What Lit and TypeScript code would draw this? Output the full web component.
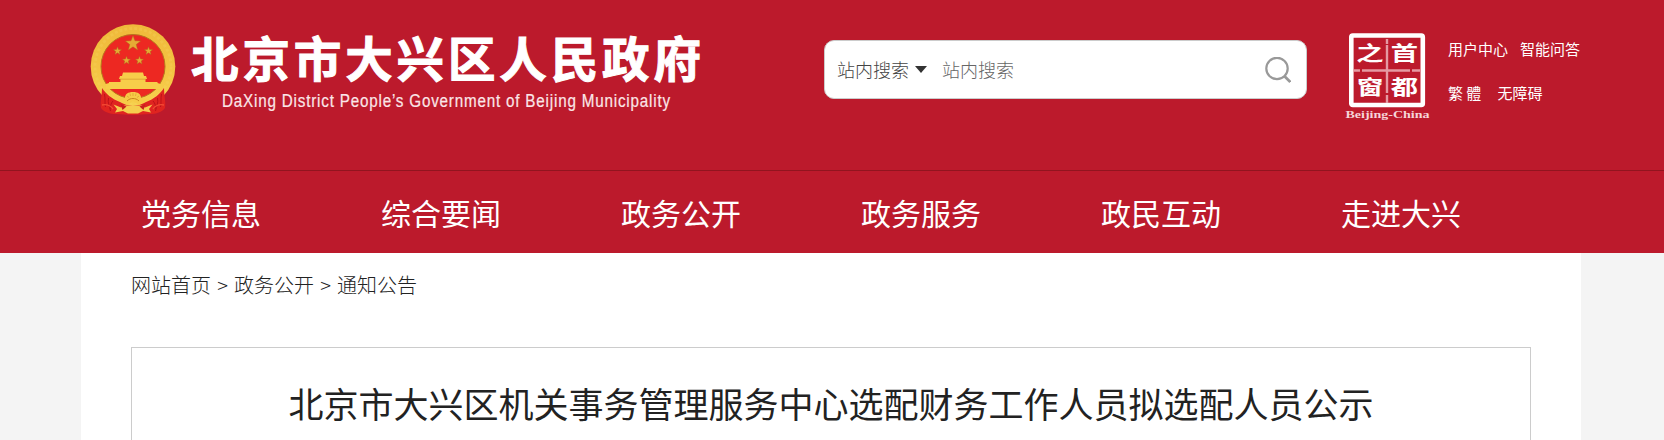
import { LitElement, css, html, svg } from "lit";
import { customElement } from "lit/decorators.js";

const NAV = ["党务信息", "综合要闻", "政务公开", "政务服务", "政民互动", "走进大兴"];
const CRUMBS = ["网站首页", "政务公开", "通知公告"];

const STARS = [
  { x: 47, y: 23.5, r: 8 },
  { x: 31.5, y: 31, r: 4.3 },
  { x: 62.5, y: 31, r: 4.3 },
  { x: 40.5, y: 40.5, r: 4.3 },
  { x: 53.5, y: 40.5, r: 4.3 },
];

const starPoints = (cx: number, cy: number, r: number) =>
  Array.from({ length: 10 }, (_, i) => {
    const radius = i % 2 ? r * 0.42 : r;
    const angle = (Math.PI / 5) * i - Math.PI / 2;
    return `${(cx + radius * Math.cos(angle)).toFixed(2)},${(cy + radius * Math.sin(angle)).toFixed(2)}`;
  }).join(" ");

/** National emblem and the name of the site. */
@customElement("site-logo")
export class SiteLogo extends LitElement {
  static styles = css`
    :host {
      display: block;
    }

    svg {
      display: block;
    }

    .name {
      font: 700 47.5px "Noto Sans CJK SC", sans-serif;
      fill: #fff;
      stroke: #fff;
      stroke-width: 1px;
    }

    .subtitle {
      font: 17.5px "Liberation Sans", Arial, sans-serif;
      fill: #fbe6e8;
      stroke: #fbe6e8;
      stroke-width: 0.2px;
    }
  `;

  // one side of the ribbon; the other side is its mirror image
  private ribbon() {
    return svg`
      <path d="M16 68C16 75 14 82 15 88c3 4 9 6 15 6l17 1V86c-6-1-10-2-13-4-8-3-14-8-18-14z" fill="#e02420" />
      <path d="M18.5 74c1 5 0 9 1 13M22.5 78c-1 5 1 8 2 13M27 81c-2 2-3 5-2 8" fill="none" stroke="#bd1219" stroke-width="1" />
      <path d="M16 85c5-1 8 0 11 4" fill="none" stroke="#f24a33" stroke-width="1.3" />
      <path d="M27.5 84.5l7.500 3 3-2h9v8h-5l-5-2.5-8 1.5 2-3.500z" fill="#f5cd4e" />
      <path d="M34.5 84l6 2.500-4 3.500z" fill="#c9201d" />
    `;
  }

  render() {
    return html`
      <svg width="620" height="100" viewBox="0 0 620 100">
        <defs>
          <linearGradient id="gold" x1="0" y1="0" x2="0" y2="1">
            <stop offset="0" stop-color="#efb93a" />
            <stop offset="0.5" stop-color="#f4c342" />
            <stop offset="1" stop-color="#f6d24e" />
          </linearGradient>
        </defs>
        <circle cx="47" cy="46.5" r="42.3" fill="url(#gold)" />
        <circle cx="47" cy="46.5" r="38" fill="none" stroke="#f8d868" stroke-width="3" stroke-dasharray="3 2" opacity="0.25" />
        <circle cx="47" cy="46.5" r="32" fill="#ed2822" stroke="#b8751d" stroke-width="1" />
        ${STARS.map((s) => svg`<polygon points=${starPoints(s.x, s.y, s.r)} fill="#e5ab35" stroke="#a96b1c" stroke-width="0.4" />`)}
        <path d="M37 52.5h20l1 3.5h2l1 3h-1.5v3h12v1l3 1v5H20v-5l3-1v-1h11.5v-3H33l1-3h2z" fill="#f7ce4a" />
        <path d="M34 59.2h26" stroke="#d59a30" stroke-width="0.7" />
        ${this.ribbon()}
        <g transform="translate(94 0) scale(-1 1)">${this.ribbon()}</g>
        <path d="M39 78c0-4 3-6 8-6s8 2 8 6l9 1-11 6-6-4-6 4-11-6z" fill="#f6cb47" />
        <path d="M41 81c2-2 4-2.5 6-2.5s4 .5 6 2.5" fill="none" stroke="#c9861f" stroke-width="1" />
        <path d="M41 76l2 1.5M44 73.500l.5 2.500M47 73v3M50 73.500l-.5 2.500M53 76l-2 1.5" stroke="#d99a2c" stroke-width="0.6" />
        <text class="name" x="105" y="57" textLength="510">北京市大兴区人民政府</text>
        <text class="subtitle" transform="translate(136 86.5) scale(0.87 1)" textLength="515" lengthAdjust="spacing">DaXing District People’s Government of Beijing Municipality</text>
      </svg>
    `;
  }
}

/** Search field with a scope selector. */
@customElement("site-search")
export class SiteSearch extends LitElement {
  static styles = css`
    :host {
      display: flex;
      align-items: center;
      box-sizing: border-box;
      width: 483px;
      height: 59px;
      padding: 0 15px 0 12px;
      border: 1px solid #ccc;
      border-radius: 10px;
      background: #fff;
      color: #444;
      font-size: 18px;
      font-weight: 300;
      line-height: 57px;
    }

    .caret {
      width: 0;
      margin: 0 15px 0 6px;
      border: 6px solid transparent;
      border-top: 7px solid #333;
      border-bottom: 0;
    }

    .placeholder {
      flex: 1;
      color: #666;
    }
  `;

  render() {
    return html`
      <span class="scope">站内搜索</span>
      <span class="caret"></span>
      <span class="placeholder">站内搜索</span>
      <svg width="26" height="26" viewBox="0 0 26 26" fill="none" stroke="#999" stroke-width="2.2">
        <circle cx="12" cy="11.5" r="10.7" />
        <path d="M19.3 19l6 6" stroke-width="2.8" />
      </svg>
    `;
  }
}

/** Seal of the capital's portal. */
@customElement("capital-seal")
export class CapitalSeal extends LitElement {
  static styles = css`
    :host {
      display: block;
    }

    svg {
      display: block;
    }

    .glyph {
      font: 700 21px "Noto Sans CJK SC", sans-serif;
      fill: #fff;
      text-anchor: middle;
    }

    .caption {
      font: 700 11px "Liberation Serif", serif;
      fill: #f6d5d9;
    }
  `;

  render() {
    return html`
      <svg width="86" height="90" viewBox="0 0 86 90">
        <rect x="6.3" y="2.5" width="71.5" height="69.5" rx="1.5" fill="none" stroke="#fff" stroke-width="4.6" />
        <path d="M42 6v5M42 12v48M42 62v8M9 37.5h6M17 37.5h48M67 37.5h8" stroke="#e59aa3" stroke-width="2.4" />
        <text class="glyph" transform="translate(25 28) scale(1.3 0.95)">之</text>
        <text class="glyph" transform="translate(59.5 28) scale(1.3 0.95)">首</text>
        <text class="glyph" transform="translate(25 62) scale(1.25 0.95)">窗</text>
        <text class="glyph" transform="translate(59.5 62) scale(1.3 0.95)">都</text>
        <text class="caption" x="0.5" y="84.5" textLength="84" lengthAdjust="spacingAndGlyphs">Beijing-China</text>
      </svg>
    `;
  }
}

@customElement("app-root")
export class AppRoot extends LitElement {
  static styles = css`
    * {
      box-sizing: border-box;
    }

    :host {
      display: block;
      height: 440px;
      overflow: hidden;
      background: #f4f4f4;
      color: #222;
      font-family: "Noto Sans CJK SC", sans-serif;
    }

    .header {
      height: 253px;
      background: #bc1a2c;
      color: #fff;
    }

    .wrap {
      width: 1500px;
      margin-left: 81px;
    }

    .top {
      display: flex;
      align-items: flex-start;
      height: 170px;
    }

    site-logo {
      margin: 20px 0 0 5px;
    }

    site-search {
      margin: 40px 0 0 118px;
    }

    capital-seal {
      margin: 33px 0 0 38px;
    }

    .links {
      margin: 37px 0 0 17px;
      font-size: 15px;
      line-height: 24px;
      white-space: nowrap;
    }

    .row {
      display: flex;
      gap: 12px;
    }

    .row + .row {
      gap: 16px;
      margin-top: 20px;
    }

    .nav {
      height: 83px;
      border-top: 1px solid #91141f;
    }

    .items {
      display: flex;
    }

    .item {
      width: 240px;
      font-size: 30px;
      line-height: 82px;
      text-align: center;
    }

    .main {
      height: 187px;
      padding: 0 50px;
      background: #fff;
    }

    .crumbs {
      display: flex;
      height: 94px;
      font-size: 20px;
      font-weight: 300;
      line-height: 63px;
    }

    .sep {
      width: 23px;
      text-align: center;
    }

    .article {
      height: 120px;
      border: 1px solid #ccc;
    }

    .title {
      margin: 29px 0 0;
      font-size: 35px;
      font-weight: 400;
      line-height: 52px;
      text-align: center;
    }
  `;

  render() {
    return html`
      <div class="header">
        <div class="wrap top">
          <site-logo></site-logo>
          <site-search></site-search>
          <capital-seal></capital-seal>
          <div class="links">
            <div class="row"><span>用户中心</span><span>智能问答</span></div>
            <div class="row"><span>繁 體</span><span>无障碍</span></div>
          </div>
        </div>
        <div class="nav">
          <div class="wrap items">${NAV.map((name) => html`<span class="item">${name}</span>`)}</div>
        </div>
      </div>
      <div class="wrap main">
        <div class="crumbs">
          ${CRUMBS.map((name, i) => html`${i ? html`<span class="sep">&gt;</span>` : ""}<span>${name}</span>`)}
        </div>
        <div class="article">
          <h1 class="title">北京市大兴区机关事务管理服务中心选配财务工作人员拟选配人员公示</h1>
        </div>
      </div>
    `;
  }
}

declare global {
  interface HTMLElementTagNameMap {
    "app-root": AppRoot;
    "site-logo": SiteLogo;
    "site-search": SiteSearch;
    "capital-seal": CapitalSeal;
  }
}
